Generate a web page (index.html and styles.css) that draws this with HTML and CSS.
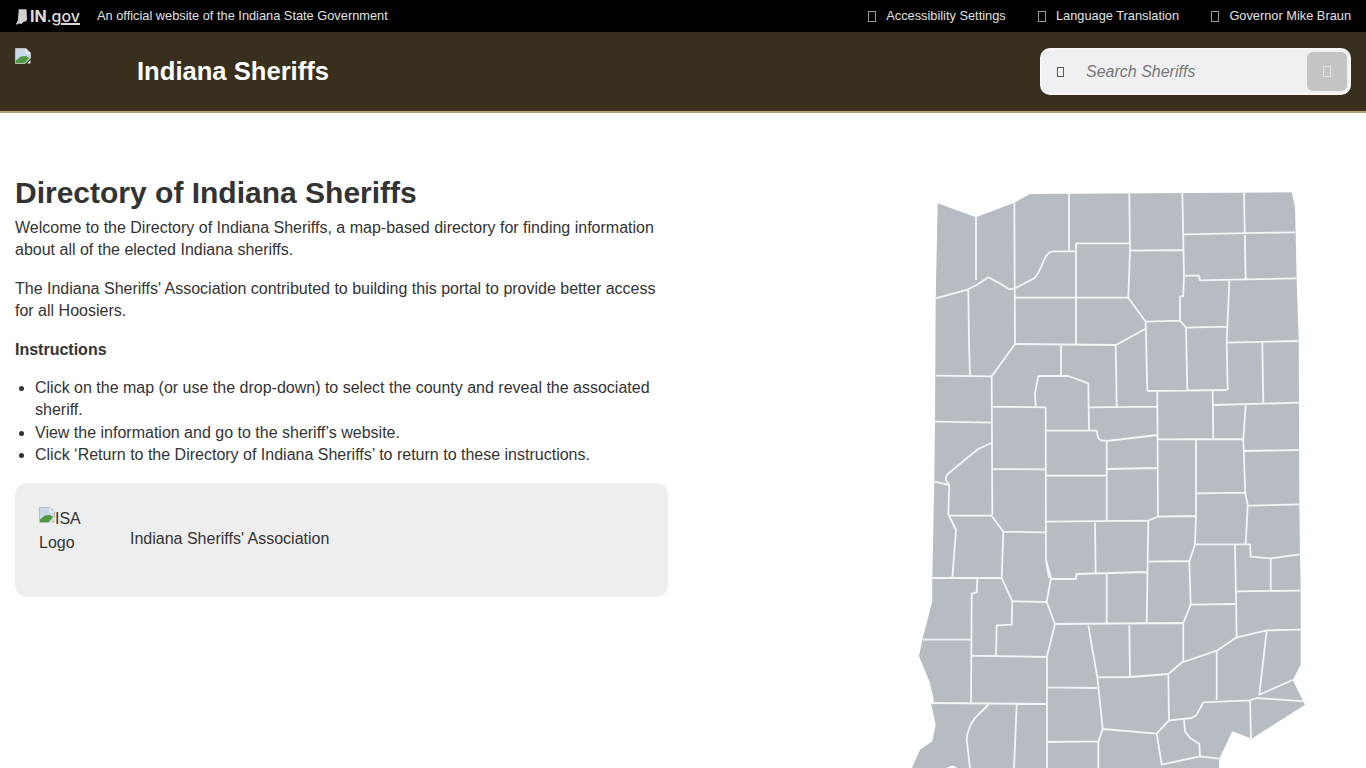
FILE: index.html
```html
<!DOCTYPE html>
<html lang="en">
<head>
<meta charset="utf-8">
<title>Indiana Sheriffs</title>
<link rel="stylesheet" href="styles.css">
</head>
<body>
<div class="topbar">
  <div class="topbar-left">
    <a class="ingov" href="#">
      <svg class="ingov-state" viewBox="0 0 12 18" width="11" height="18"><path d="M3 0.500H11.500L12 12L11 13.500L8 14.500L6 16.500L3 16L1 17.500L0 16.500L2 13Z" fill="#d0d0d0"/></svg>
      <span class="ingov-in">IN</span><span class="ingov-dot">.g</span><span class="ingov-ov">ov</span>
    </a>
    <span class="official">An official website of the Indiana State Government</span>
  </div>
  <nav class="topnav">
    <a href="#"><i class="tofu"></i>Accessibility Settings</a>
    <a href="#"><i class="tofu"></i>Language Translation</a>
    <a href="#"><i class="tofu"></i>Governor Mike Braun</a>
  </nav>
</div>
<header class="masthead">
  <div class="brand">
    <span class="logo-slot">
      <svg class="broken" viewBox="0 0 16 16" width="16" height="16"><path d="M0.500 0.500H11L15.500 5V10L10 15.500H0.500Z" fill="#c9d7ea" stroke="#bcbcbc"/><path d="M11 1V5H15" fill="none" stroke="#fff"/><path d="M1 15V12.500L6 8.500L11 8L14 10L9.500 15Z" fill="#4c9a3f"/><path d="M15.500 12L12 15.500H15.500Z" fill="#e8e8e8"/></svg>
    </span>
    <span class="site-title">Indiana Sheriffs</span>
  </div>
  <form class="search">
    <i class="tofu tofu-dark"></i>
    <span class="search-text">Search Sheriffs</span>
    <span class="search-btn"><i class="tofu tofu-light"></i></span>
  </form>
</header>
<main class="content">
  <section class="intro">
    <h1>Directory of Indiana Sheriffs</h1>
    <p>Welcome to the Directory of Indiana Sheriffs, a map-based directory for finding information about all of the elected Indiana sheriffs.</p>
    <p>The Indiana Sheriffs' Association contributed to building this portal to provide better access for all Hoosiers.</p>
    <p><strong>Instructions</strong></p>
    <ul>
      <li>Click on the map (or use the drop-down) to select the county and reveal the associated sheriff.</li>
      <li>View the information and go to the sheriff’s website.</li>
      <li>Click ‘Return to the Directory of Indiana Sheriffs’ to return to these instructions.</li>
    </ul>
    <div class="assoc">
      <div class="assoc-logo"><svg class="broken" viewBox="0 0 16 16" width="16" height="16"><path d="M0.500 0.500H11L15.500 5V10L10 15.500H0.500Z" fill="#c9d7ea" stroke="#bcbcbc"/><path d="M11 1V5H15" fill="none" stroke="#fff"/><path d="M1 15V12.500L6 8.500L11 8L14 10L9.500 15Z" fill="#4c9a3f"/><path d="M15.500 12L12 15.500H15.500Z" fill="#bcbcbc"/></svg>ISA Logo</div>
      <span class="assoc-name">Indiana Sheriffs' Association</span>
    </div>
  </section>
  <section class="map-col">
    <svg class="map" viewBox="905 185 410 583" width="410" height="583">
      <path class="land" d="M937.700 203.300L976 217.300L1014.300 202.700L1030 194L1291.700 192.300L1295 207L1296.700 280L1298.700 340L1299 403L1299.300 503L1300 554.300L1300.700 591L1300.700 664.700L1292.700 680L1305 704.700L1251.700 738.700L1232.300 731.300L1219.300 758.700L1219 768H957C955 765 950 765 947 768H912L920 749.700L932.300 741.300L935.700 724.700L931 703L934 701.300L930 683L919 656.300L922.300 639.700L932.300 601.300L932.300 578L934.300 481.700L935 421.700L935.700 298.300Z"/>
      <path class="lines" d="M976 217V280M935.700 298.300L968.300 289.300L976.700 285L988.300 277.300L996.700 281.700L1009.300 289.300L1015 288.300L1034.300 278.300C1040 272 1042 264 1045.700 256.700C1048 253 1050 251.300 1053.300 251.300H1076.700M1014.300 202.700L1015 344M1069 194V251.300M1076 243.300V344M1076 243.300H1129.300M1015 297.700H1128.300M1015 344L1115.700 345M968.300 289.300L969 343.300L970 375.700M935.700 375.700L991.700 376.300L1015 344M991.700 376.300L992.300 515M1061 345V376M1038.300 376H1068.300L1088.300 383.300L1089 430.700M1038.300 376L1035 393.300L1035.700 406.700M992.300 406.700L1045.700 407.300L1046 560L1049 578M1046 430.700H1096.700L1098.300 438.300L1101.700 440.700H1106.700V520.700M1089 407.300L1156.700 406.700M935 421.700L991.700 422.700M991.700 442.700L978.300 449L966.700 458.300L946.700 475L945.700 480L949.300 485L934.300 481.700M949.300 485L948.300 514L956 530L952.300 578M950 515.700H991.700L1003.300 531.700L1045.700 532.300M1003.300 531.700L1001.700 578L1012.300 601.300L1046.700 602M992.300 469L1045.700 469.300M1046 475.700L1106 475.300M1046 521.700L1148.300 520.700M1095 521.700L1095.700 573M1147.300 391L1226.700 390M1129.300 193.300L1130 250.700L1128.300 297.700L1145.700 321.700L1147.300 391M1116 345L1145 329M1115.700 345L1116.700 406.700M1182.300 192.700L1184 275L1183.300 296L1180 296.700V320.700L1186 327.700L1187.300 390M1130 250.700L1183.300 250M1183.300 234.300L1295 232.300M1244 192.700L1245.700 280M1185 275.700H1199L1200 280.300L1296.700 278.300M1229.300 280.700L1226.700 343.300L1227.700 390M1186 327.700L1226.700 326.700M1227.300 342.700L1298.300 341M1262.300 342.700L1263.300 403M1145.700 321.700L1180 320.700M1157.300 391.700L1158 516.700M1212.700 390.700L1213.300 439M1213.300 405L1299 402.700M1157.300 439.300L1243.300 439M1106.700 441L1157.300 435M1106.700 469L1157.300 468M1196 439.300V516.700L1195 544.300L1189.300 561.700L1190.700 604.700L1183.300 623V661.300L1168.300 674L1130 677L1097.300 677.300M1245.700 405L1243.300 439L1245.300 493.300L1247.700 505L1245.700 544.300M1244 451L1299.300 450M1196.700 493.300L1245.300 492.700M1247.700 505.700L1299.300 504.300M1195 544.300H1250L1250.700 556.700L1270.700 558.300L1300 554.300M1270.700 558V590.700M1235 544.300L1236.700 637.300M1148.300 520.700L1157.300 516.700L1196 516M1148.300 520.700L1146.700 623M1146.700 561.700L1189.300 561M932.300 578H1001.700M977.300 578L976.700 592.300L971.700 593.700L971 703M922.300 639.700H971M1012.300 601.300L1011.700 624.700L996.700 625.300L996 656.300M971 655.700L1046.700 657M1046 560L1051 578L1046.700 602L1055 624L1047 656.300V768M1051 579H1075.700L1076.700 574L1146.700 572M1055 624L1182.700 623M931 703L1046.700 704M989 704L975 718C969 726 967 733 966.700 739.700L970 768M1016.700 704L1014 768M1088.300 625.700L1097.300 677L1102.700 728.700L1098.300 742V768M1047 687.300L1096.700 688M1047 742L1098.300 741.300M1106.700 573V625M1190.700 604.700L1235 604M1236.700 591.300L1300.700 590.700M1236.700 637.300L1266.700 630.300L1300.700 629.700M1266.700 630.300L1259.300 694.700L1292.700 680M1236.700 637.300L1216.700 650.700L1183.300 662M1216.700 650.700V700M1129.300 625.300L1130 677M1168.300 674L1169 720.300L1156.700 733.700L1161.700 764.700L1200 756.300L1219.300 758.700M1102.700 729L1156.700 733.700M1169 720.300L1191.700 718L1196.700 714.700L1203.300 702.300L1250 700.300L1256.700 698L1304 701.300M1250 700.300L1251 738M1184 719.700L1185 731.300L1190 738L1199.300 743.700L1200 756.300"/>
    </svg>
  </section>
</main>
</body>
</html>
```
FILE: styles.css
```css
* { box-sizing: border-box; }
html, body { margin: 0; padding: 0; height: 768px; overflow: hidden; background: #fff; }
body { font-family: "Liberation Sans", Arial, sans-serif; font-size: 16px; line-height: 22.4px; color: #333; }
a { color: inherit; text-decoration: none; }
.topbar { height: 32px; background: #000; color: #e2e2e2; font-size: 12.8px; display: flex; align-items: center; justify-content: space-between; padding: 0 15px; }
.topbar-left { display: flex; align-items: center; }
.ingov { display: flex; align-items: center; width: 82px; color: #dcdcdc; font-family: Inter, sans-serif; font-size: 16px; line-height: 18px; }
.ingov-state { margin: 1px 3px 0 1px; }
.ingov-in { font-weight: 700; }
.ingov-dot { font-weight: 500; }
.ingov-ov { font-weight: 500; border-bottom: 2px solid #dcdcdc; line-height: 14px; margin-top: 2px; }
.official { white-space: nowrap; }
.topnav { display: flex; gap: 32.300px; }
.topnav a { display: flex; align-items: center; white-space: nowrap; }
.tofu { display: inline-block; width: 8px; height: 11px; border: 1px solid #999; margin-right: 10px; }
.masthead { height: 81px; background: #392f1e; border-bottom: 2px solid #b8a56f; box-shadow: inset 0 -4px 0 #3f3220; display: flex; justify-content: space-between; padding: 16px 15px 0; }
.brand { display: flex; }
.logo-slot { width: 122px; }
.broken { display: inline-block; vertical-align: top; }
.site-title { color: #fff; font-size: 25.6px; font-weight: 700; line-height: 46px; }
.search { width: 311px; height: 47px; background: #f0f0f2; border: 2px solid #f7f7f8; border-radius: 10px; display: flex; align-items: center; padding: 0 2px 0 15px; }
.tofu-dark { width: 7px; height: 10px; margin-right: 22px; border-color: #555; }
.search-text { flex: 1; font-style: italic; color: #777; margin-top: 1px; }
.search-btn { width: 40px; height: 39px; border-radius: 6px; background: #c4c4c4; display: flex; align-items: center; justify-content: center; }
.tofu-light { margin: 0; border-color: #e2e2e2; }
.content { display: flex; padding: 62px 15px 0; }
.intro { width: 653px; flex: none; }
h1 { font-size: 30px; line-height: 36px; font-weight: 700; margin: 0 0 6px; color: #333; }
p { margin: 0 0 16px; }
ul { margin: 0 0 16px; padding-left: 20px; }
.assoc { width: 653px; height: 114px; background: #eee; border-radius: 12px; display: flex; padding: 24px; }
.assoc-logo { width: 50px; height: 48px; line-height: 24px; color: #333; margin-right: 41px; flex: none; }
.assoc-name { align-self: flex-start; margin-top: 21px; color: #333; }
.map-col { flex: 1; display: flex; justify-content: flex-end; margin-top: 10px; margin-right: 36px; }
.map { display: block; flex: none; }
.land { fill: #b6bcc2; }
.lines { fill: none; stroke: #f4f5f6; stroke-width: 1.800; stroke-linejoin: round; }
```
